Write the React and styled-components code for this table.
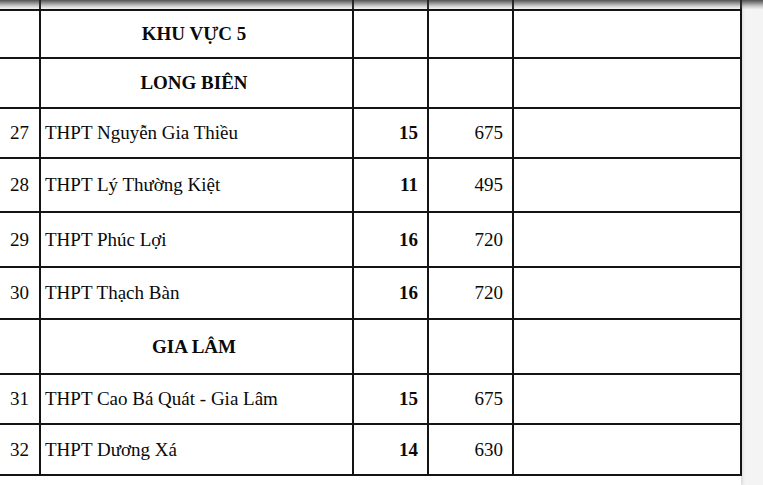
import React from 'react';
import styled, { createGlobalStyle } from 'styled-components';

const GlobalStyle = createGlobalStyle`
  html, body {
    margin: 0;
    padding: 0;
    background: #f4f4f4;
    overflow: hidden;
  }
`

const Viewer = styled.div`
  position: relative;
  width: 763px;
  height: 485px;
  overflow: hidden;
  background: #f4f4f4;
`

const Page = styled.div`
  width: 741px;
  height: 485px;
  background: #ffffff;
  box-shadow: 2px 0 3px rgba(0, 0, 0, 0.1);
`

const TopShade = styled.div`
  position: absolute;
  top: 0;
  left: 0;
  right: 0;
  height: 9px;
  background: linear-gradient(rgba(40, 40, 40, 0.8), rgba(110, 110, 110, 0.3) 70%, rgba(160, 160, 160, 0.1));
  pointer-events: none;
`

const Table = styled.table`
  width: 741px;
  table-layout: fixed;
  border-collapse: collapse;
  font-family: "Liberation Serif", "Times New Roman", serif;
  font-size: 19px;
  color: #0a0a0a;
`

const Row = styled.tr`
  height: ${p => p.$h}px;
`

const Cell = styled.td`
  border: 2px solid #141414;
  padding: 0 9px 0 4px;
  vertical-align: middle;
  white-space: nowrap;
  text-align: ${p => p.$align || 'left'};
  font-weight: ${p => (p.$bold ? 700 : 400)};
  &:first-child {
    border-left: none;
    padding: 0;
    text-align: center;
  }
`

const EdgeCell = styled(Cell)`
  border-top: none;
`

const rows = [
  { type: 'head', title: 'KHU VỰC 5', h: 48 },
  { type: 'head', title: 'LONG BIÊN', h: 50 },
  { type: 'item', no: 27, name: 'THPT Nguyễn Gia Thiều', cls: 15, total: 675, h: 50 },
  { type: 'item', no: 28, name: 'THPT Lý Thường Kiệt', cls: 11, total: 495, h: 54 },
  { type: 'item', no: 29, name: 'THPT Phúc Lợi', cls: 16, total: 720, h: 55 },
  { type: 'item', no: 30, name: 'THPT Thạch Bàn', cls: 16, total: 720, h: 52 },
  { type: 'head', title: 'GIA LÂM', h: 55 },
  { type: 'item', no: 31, name: 'THPT Cao Bá Quát - Gia Lâm', cls: 15, total: 675, h: 50 },
  { type: 'item', no: 32, name: 'THPT Dương Xá', cls: 14, total: 630, h: 51 },
];

export default function App() {
  return (
    <Viewer>
      <GlobalStyle />
      <Page>
        <Table>
          <colgroup>
            <col style={{ width: 40 }} />
            <col style={{ width: 313 }} />
            <col style={{ width: 75 }} />
            <col style={{ width: 85 }} />
            <col style={{ width: 228 }} />
          </colgroup>
          <tbody>
            <Row $h={10}>
              <EdgeCell />
              <EdgeCell />
              <EdgeCell />
              <EdgeCell />
              <EdgeCell />
            </Row>
            {rows.map((r, i) => (
              r.type === 'head' ? (
                <Row key={i} $h={r.h}>
                  <Cell />
                  <Cell $align="center" $bold>{r.title}</Cell>
                  <Cell />
                  <Cell />
                  <Cell />
                </Row>
              ) : (
                <Row key={i} $h={r.h}>
                  <Cell>{r.no}</Cell>
                  <Cell>{r.name}</Cell>
                  <Cell $align="right" $bold>{r.cls}</Cell>
                  <Cell $align="right">{r.total}</Cell>
                  <Cell />
                </Row>
              )
            ))}
          </tbody>
        </Table>
      </Page>
      <TopShade />
    </Viewer>
  );
}
